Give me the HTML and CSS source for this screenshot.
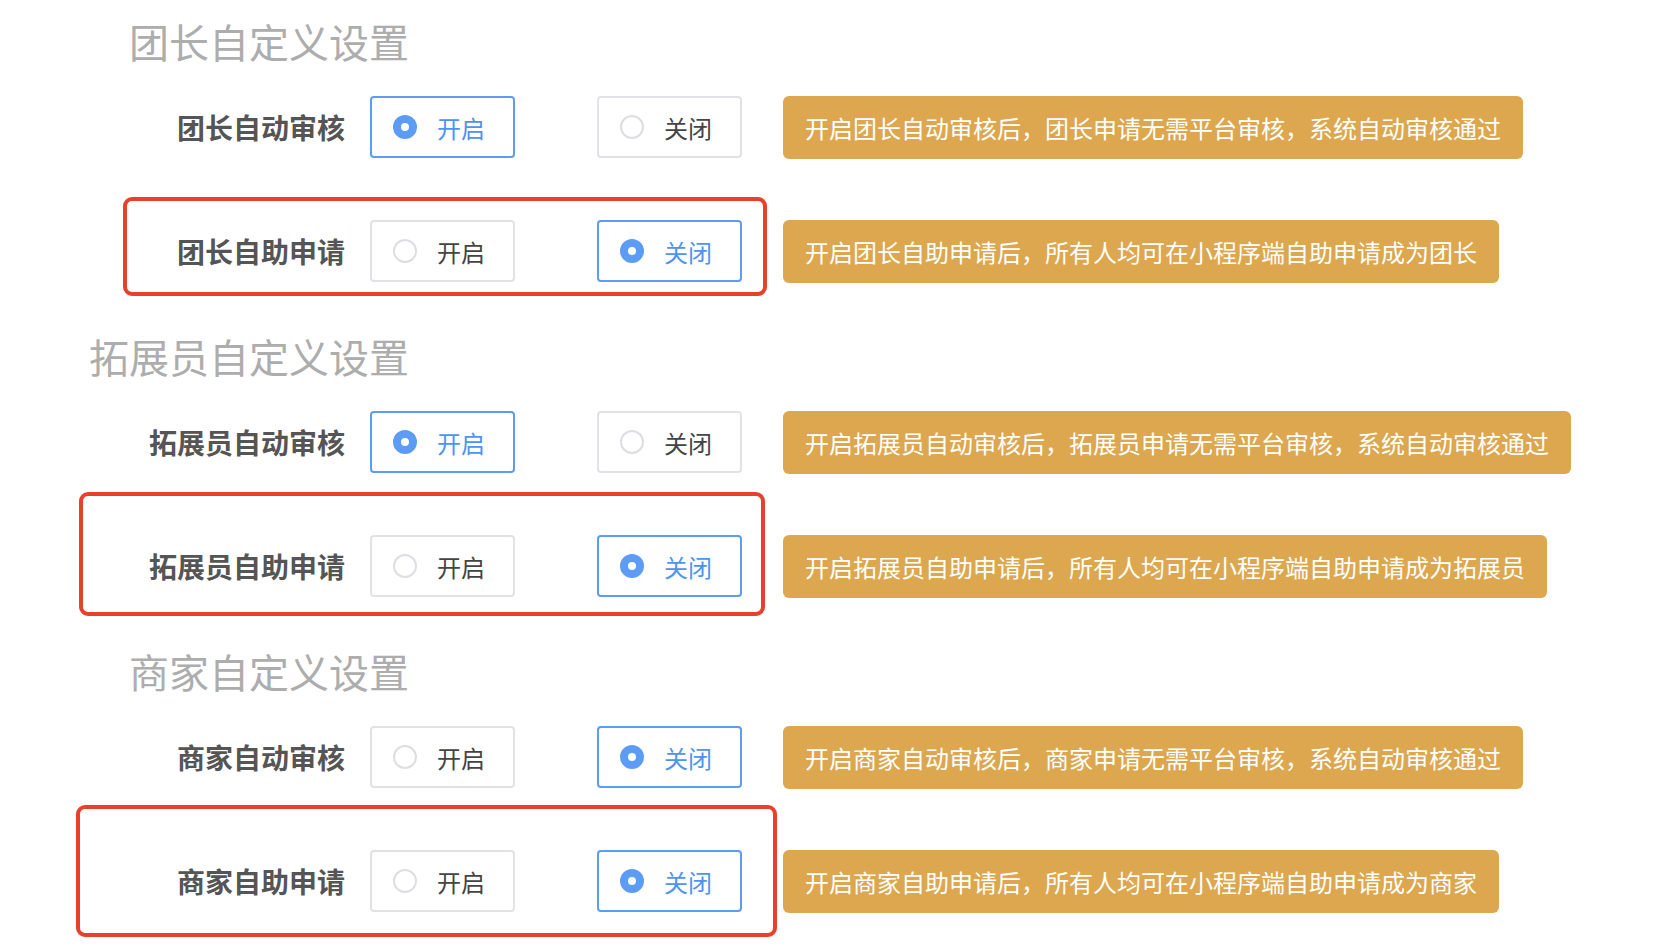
FILE: index.html
```html
<!DOCTYPE html>
<html lang="zh-CN">
<head>
    <meta charset="UTF-8">
    <title>自定义设置</title>
    <link rel="stylesheet" href="styles.css">
</head>
<body>
<div class="page">

    <!-- 团长 -->
    <section class="group">
        <h2 class="group-title">团长自定义设置</h2>
        <div class="setting">
            <span class="setting-label">团长自动审核</span>
            <label class="radio is-checked"><span class="radio-dot"></span><span class="radio-text">开启</span></label>
            <label class="radio"><span class="radio-dot"></span><span class="radio-text">关闭</span></label>
            <div class="tip">开启团长自动审核后，团长申请无需平台审核，系统自动审核通过</div>
        </div>
        <div class="setting">
            <span class="setting-label">团长自助申请</span>
            <label class="radio"><span class="radio-dot"></span><span class="radio-text">开启</span></label>
            <label class="radio is-checked"><span class="radio-dot"></span><span class="radio-text">关闭</span></label>
            <div class="tip">开启团长自助申请后，所有人均可在小程序端自助申请成为团长</div>
        </div>
    </section>

    <!-- 拓展员 -->
    <section class="group">
        <h2 class="group-title">拓展员自定义设置</h2>
        <div class="setting">
            <span class="setting-label">拓展员自动审核</span>
            <label class="radio is-checked"><span class="radio-dot"></span><span class="radio-text">开启</span></label>
            <label class="radio"><span class="radio-dot"></span><span class="radio-text">关闭</span></label>
            <div class="tip">开启拓展员自动审核后，拓展员申请无需平台审核，系统自动审核通过</div>
        </div>
        <div class="setting">
            <span class="setting-label">拓展员自助申请</span>
            <label class="radio"><span class="radio-dot"></span><span class="radio-text">开启</span></label>
            <label class="radio is-checked"><span class="radio-dot"></span><span class="radio-text">关闭</span></label>
            <div class="tip">开启拓展员自助申请后，所有人均可在小程序端自助申请成为拓展员</div>
        </div>
    </section>

    <!-- 商家 -->
    <section class="group">
        <h2 class="group-title">商家自定义设置</h2>
        <div class="setting">
            <span class="setting-label">商家自动审核</span>
            <label class="radio"><span class="radio-dot"></span><span class="radio-text">开启</span></label>
            <label class="radio is-checked"><span class="radio-dot"></span><span class="radio-text">关闭</span></label>
            <div class="tip">开启商家自动审核后，商家申请无需平台审核，系统自动审核通过</div>
        </div>
        <div class="setting">
            <span class="setting-label">商家自助申请</span>
            <label class="radio"><span class="radio-dot"></span><span class="radio-text">开启</span></label>
            <label class="radio is-checked"><span class="radio-dot"></span><span class="radio-text">关闭</span></label>
            <div class="tip">开启商家自助申请后，所有人均可在小程序端自助申请成为商家</div>
        </div>
    </section>

    <!-- annotation marks -->
    <div class="mark mark-1"></div>
    <div class="mark mark-2"></div>
    <div class="mark mark-3"></div>

</div>
</body>
</html>
```

FILE: styles.css
```css
/* General */
html, body {
    min-height: 100%;
}
body {
    margin: 0;
    background: #fff;
    font-family: "Noto Sans CJK SC", "Noto Sans", sans-serif;
    color: #444;
}
.page {
    position: relative;
    min-height: 952px;
    box-sizing: border-box;
    padding-top: 13px;
}

/* Groups */
.group + .group {
    margin-top: 46px;
}
.group-title {
    width: 409px;
    margin: 0 0 27px;
    font-size: 40px;
    font-weight: normal;
    line-height: 56px;
    text-align: right;
    color: #adadad;
}

/* Setting rows */
.setting {
    display: flex;
    align-items: center;
    height: 62px;
}
.setting + .setting {
    margin-top: 62px;
}
.setting-label {
    width: 345px;
    margin-right: 25px;
    font-size: 28px;
    font-weight: bold;
    text-align: right;
    color: #555;
}

/* Radio boxes */
.radio {
    box-sizing: border-box;
    display: flex;
    align-items: center;
    width: 145px;
    height: 62px;
    padding-left: 21px;
    border: 2px solid #e1e2e7;
    border-radius: 4px;
    cursor: pointer;
}
.radio + .radio {
    margin-left: 82px;
}
.radio-dot {
    box-sizing: border-box;
    width: 24px;
    height: 24px;
    border: 2px solid #dcdee3;
    border-radius: 50%;
    background: #fff;
}
.radio-text {
    margin-left: 20px;
    font-size: 24px;
    color: #444;
}
.radio.is-checked {
    border-color: #5c9cf5;
}
.radio.is-checked .radio-dot {
    border: 8px solid #5c9cf5;
}
.radio.is-checked .radio-text {
    color: #4f93f2;
}

/* Tips */
.tip {
    box-sizing: border-box;
    height: 63px;
    margin-left: 41px;
    padding: 0 22px;
    border-radius: 6px;
    background: #dca74f;
    color: #fff;
    font-size: 24px;
    line-height: 63px;
    white-space: nowrap;
}

/* Red annotation marks */
.mark {
    position: absolute;
    box-sizing: border-box;
    border: 4px solid #e8412b;
    border-radius: 9px;
    pointer-events: none;
}
.mark-1 { left: 123px; top: 197px; width: 644px; height: 99px; }
.mark-2 { left: 79px;  top: 492px; width: 686px; height: 124px; }
.mark-3 { left: 76px;  top: 805px; width: 701px; height: 132px; }
```
